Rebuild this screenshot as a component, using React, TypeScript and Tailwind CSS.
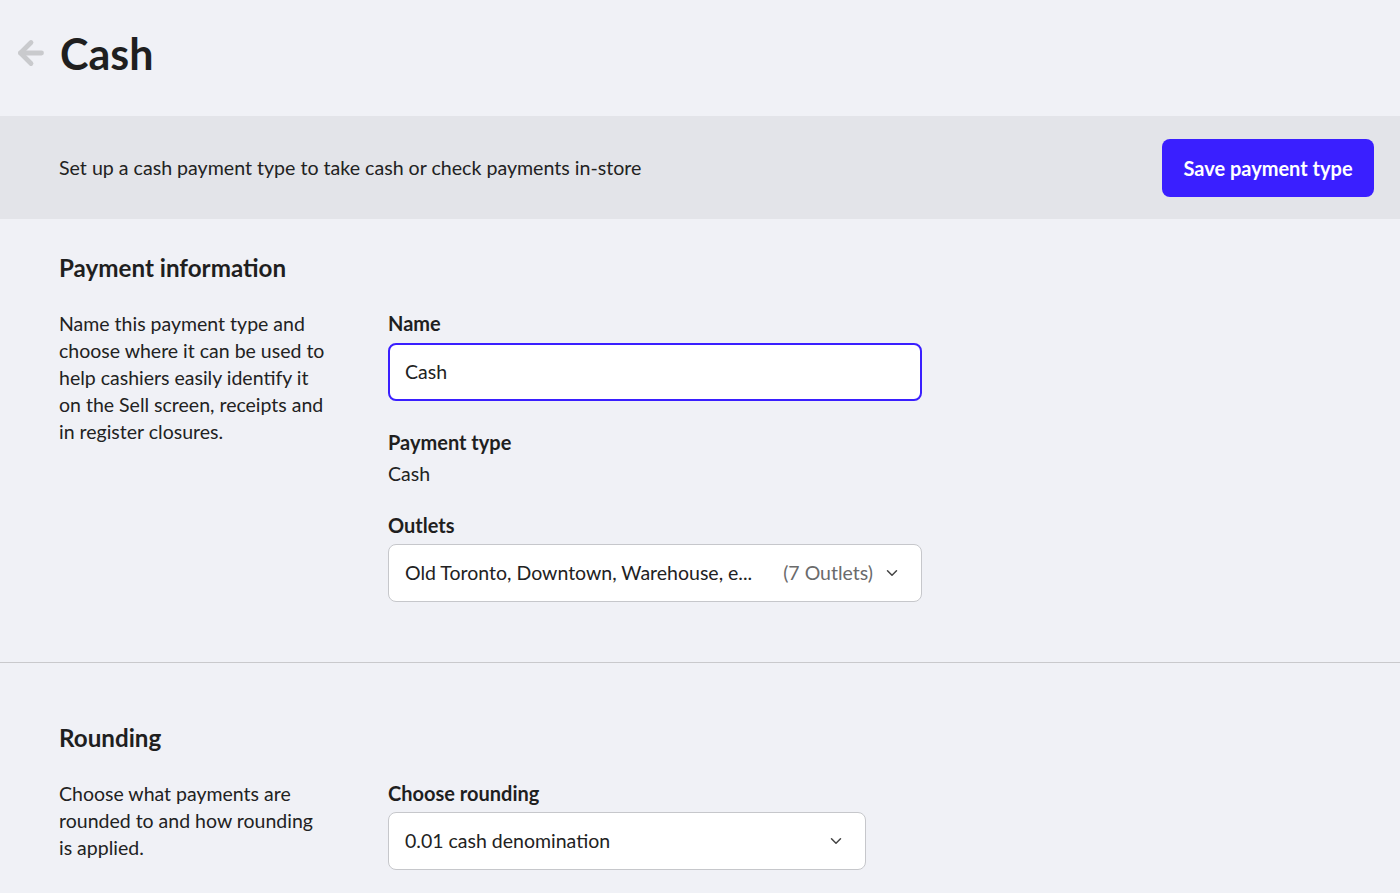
import React from 'react';
import { ArrowLeft, ChevronDown } from 'lucide-react';

const Field: React.FC<{ label: string; children: React.ReactNode; className?: string }> = ({ label, children, className }) => (
  <div className={className}>
    <div className="text-[20px] leading-[27px] font-bold text-[#1f1f1f]">{label}</div>
    {children}
  </div>
);

const App: React.FC = () => {
  return (
    <div className="min-h-screen bg-[#f0f1f6] text-[#232323] font-['Lato',sans-serif]">
      {/* Header */}
      <div className="h-[116px] flex items-center pl-[13px] pb-[10px]">
        <ArrowLeft size={36} strokeWidth={3.2} className="text-[#c9cacd]" />
        <h1 className="ml-[11px] text-[43px] font-bold text-[#1f1f1f] leading-none">Cash</h1>
      </div>

      {/* Description bar */}
      <div className="h-[103px] bg-[#e3e4e9] flex items-center justify-between pl-[59px] pr-[26px]">
        <p className="text-[19.6px] text-[#222]">Set up a cash payment type to take cash or check payments in-store</p>
        <button className="h-[58px] w-[212px] rounded-[8px] bg-[#3a1fff] text-white text-[20px] font-bold">
          Save payment type
        </button>
      </div>

      {/* Payment information */}
      <section className="pt-[35px] pb-[60px] pl-[59px] border-b border-[#c9c9cc]">
        <h2 className="text-[24.2px] leading-[28px] font-bold text-[#1f1f1f]">Payment information</h2>
        <div className="mt-[28px] flex gap-[57px]">
          <p className="w-[272px] text-[19.5px] leading-[27px] text-[#222]">
            Name this payment type and choose where it can be used to help cashiers easily identify it on the Sell
            screen, receipts and in register closures.
          </p>
          <div className="w-[534px]">
            <Field label="Name">
              <div className="mt-[6px] h-[58px] rounded-[8px] border-2 border-[#3a1fff] bg-white flex items-center px-[15px] text-[19.5px] text-[#222]">
                Cash
              </div>
            </Field>
            <Field label="Payment type" className="mt-[28px]">
              <div className="mt-[4px] text-[19.5px] leading-[27px] text-[#222]">Cash</div>
            </Field>
            <Field label="Outlets" className="mt-[25px]">
              <div className="mt-[5px] h-[58px] rounded-[8px] border border-[#c6c7cb] bg-white flex items-center pl-[16px] pr-[20px] text-[19.5px]">
                <span className="text-[#222]">Old Toronto, Downtown, Warehouse, e...</span>
                <span className="ml-auto text-[#6b6b6b]">(7 Outlets)</span>
                <ChevronDown size={18} strokeWidth={2} className="ml-[10px] text-[#444]" />
              </div>
            </Field>
          </div>
        </div>
      </section>

      {/* Rounding */}
      <section className="pt-[61px] pl-[59px]">
        <h2 className="text-[24.2px] leading-[28px] font-bold text-[#1f1f1f]">Rounding</h2>
        <div className="mt-[28px] flex gap-[57px]">
          <p className="w-[272px] text-[19.5px] leading-[27px] text-[#222]">
            Choose what payments are rounded to and how rounding is applied.
          </p>
          <div className="w-[478px]">
            <Field label="Choose rounding">
              <div className="mt-[5px] h-[58px] rounded-[8px] border border-[#c6c7cb] bg-white flex items-center pl-[16px] pr-[20px] text-[19.5px]">
                <span className="text-[#222]">0.01 cash denomination</span>
                <ChevronDown size={18} strokeWidth={2} className="ml-auto text-[#444]" />
              </div>
            </Field>
          </div>
        </div>
      </section>
    </div>
  );
};

export default App;
